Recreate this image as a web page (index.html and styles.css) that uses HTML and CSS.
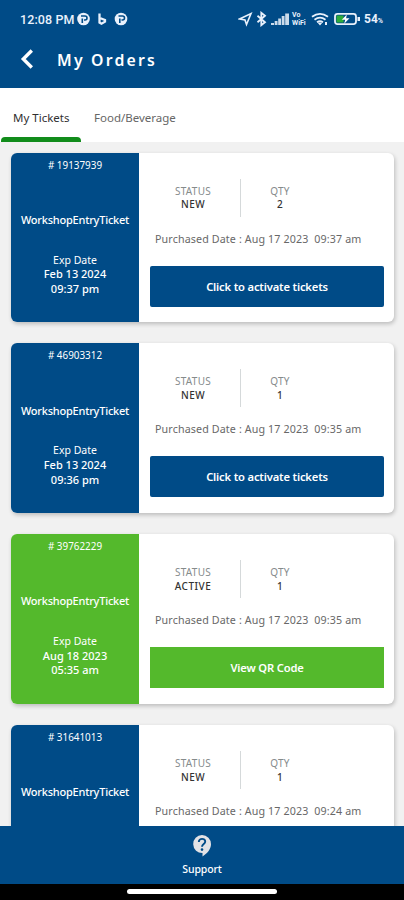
FILE: index.html
```html
<!DOCTYPE html>
<html lang="en">
<head>
<meta charset="utf-8">
<title>My Orders</title>
<link rel="stylesheet" href="styles.css">
</head>
<body>
<div class="phone">
  <header class="top">
    <div class="status">
      <span class="clock">12:08 PM</span>
      <svg class="notif" width="51" height="14" viewBox="0 0 51 14">
        <circle cx="6.500" cy="7" r="6.300" fill="#e9f1fc"/>
        <path d="M5.300 11V6.500M4 4h4a2 2 0 0 1 0 4H7" fill="none" stroke="#004b87" stroke-width="1.600"/>
        <path d="M22.500 1.500v9l2 1.200 3.500-2V8L23.500 6.200" fill="none" stroke="#e9f1fc" stroke-width="2.300"/>
        <circle cx="44" cy="7" r="6.300" fill="#e9f1fc"/>
        <path d="M42.800 11V6.500M41.500 4h4a2 2 0 0 1 0 4h-1" fill="none" stroke="#004b87" stroke-width="1.600"/>
      </svg>
      <svg class="system" width="52" height="16" viewBox="0 0 52 16">
        <g fill="none" stroke="#e9f1fc" stroke-width="1.600">
          <path d="M1.500 8 13 2.500 8.500 13.500 7 9z"/>
          <path d="m19.500 4.800 7.500 6.400-3.700 3V1.800l3.700 3-7.500 6.400" stroke-width="1.800"/>
        </g>
        <path d="M33 12h3v2h-3zM36.700 10h2.800v4h-2.800zM40.200 7.500H43V14h-2.800zM43.700 5h2.800v9h-2.800zM47.200 2.500H51V14h-3.800z" fill="#cbdbea"/>
      </svg>
      <span class="vowifi"><span>Vo</span><span>WiFi</span></span>
      <svg class="power" width="50" height="16" viewBox="0 0 50 16">
        <g fill="none" stroke="#e9f1fc" stroke-width="1.800">
          <path d="M1 5.800q8-6 16 0M3.500 8.700q5.500-4 11 0M6 11.200q3-2 6 0"/>
          <rect x="24" y="2.900" width="21" height="10.200" rx="2.500"/>
        </g>
        <path d="m6.500 11.500 2.500 3 2.500-3zM14 11h2v3h-2zM46.500 6H49v4h-2.500z" fill="#e9f1fc"/>
        <path d="M25.500 4.500h7v7h-7z" fill="#2dac3a"/>
        <path d="m35.800 3.500-5 5.200h3.400l-1 4 5.300-5.500h-3.400z" fill="#fff"/>
      </svg>
      <span class="pct">54<small>%</small></span>
    </div>
    <div class="title">
      <svg width="14" height="20" viewBox="0 0 14 20"><path d="M11.800 1.500 3.300 10l8.500 8.500" fill="none" stroke="#fff" stroke-width="3.400"/></svg>
      <h1>My Orders</h1>
    </div>
  </header>
  <nav class="tabs">
    <span class="tab active">My Tickets</span>
    <span class="tab food">Food/Beverage</span>
  </nav>
  <main class="list">
    <article class="card">
      <div class="stub"><p class="num"># 19137939</p><p class="name">WorkshopEntryTicket</p><p class="exp">Exp Date</p><p class="date">Feb 13 2024</p><p class="date">09:37 pm</p></div>
      <div class="info">
        <div class="facts"><dl><dt>STATUS</dt><dd>NEW</dd></dl><dl><dt>QTY</dt><dd>2</dd></dl></div>
        <p class="bought">Purchased Date : Aug 17 2023&nbsp; 09:37 am</p>
        <button>Click to activate tickets</button>
      </div>
    </article>
    <article class="card">
      <div class="stub"><p class="num"># 46903312</p><p class="name">WorkshopEntryTicket</p><p class="exp">Exp Date</p><p class="date">Feb 13 2024</p><p class="date">09:36 pm</p></div>
      <div class="info">
        <div class="facts"><dl><dt>STATUS</dt><dd>NEW</dd></dl><dl><dt>QTY</dt><dd>1</dd></dl></div>
        <p class="bought">Purchased Date : Aug 17 2023&nbsp; 09:35 am</p>
        <button>Click to activate tickets</button>
      </div>
    </article>
    <article class="card live">
      <div class="stub"><p class="num"># 39762229</p><p class="name">WorkshopEntryTicket</p><p class="exp">Exp Date</p><p class="date">Aug 18 2023</p><p class="date">05:35 am</p></div>
      <div class="info">
        <div class="facts"><dl><dt>STATUS</dt><dd>ACTIVE</dd></dl><dl><dt>QTY</dt><dd>1</dd></dl></div>
        <p class="bought">Purchased Date : Aug 17 2023&nbsp; 09:35 am</p>
        <button>View QR Code</button>
      </div>
    </article>
    <article class="card">
      <div class="stub"><p class="num"># 31641013</p><p class="name">WorkshopEntryTicket</p></div>
      <div class="info">
        <div class="facts"><dl><dt>STATUS</dt><dd>NEW</dd></dl><dl><dt>QTY</dt><dd>1</dd></dl></div>
        <p class="bought">Purchased Date : Aug 17 2023&nbsp; 09:24 am</p>
      </div>
    </article>
  </main>
  <footer class="support">
    <svg width="20" height="24" viewBox="0 0 20 24">
      <path d="M10 1a9 9 0 0 1 9 9.200c0 5-4 9.300-8.500 12.300v-3.400A9 9 0 1 1 10 1z" fill="#e2e2e6"/>
      <path d="M6.800 8c0-4.300 6.600-4 6.400-.3C13.100 10 10 10 10 12.800" fill="none" stroke="#004b87" stroke-width="1.900"/>
      <circle cx="10" cy="15.600" r="1.300" fill="#004b87"/>
    </svg>
    <span>Support</span>
  </footer>
  <div class="gesture"><i></i></div>
</div>
</body>
</html>
```

FILE: styles.css
```css
* { box-sizing: border-box; }
body, p, h1, dl, dt, dd { margin: 0; }
body { font-family: "Noto Sans", sans-serif; overflow: hidden; }
svg { display: block; flex: none; }
.phone { width: 404px; height: 900px; background: #f1f1f1; display: flex; flex-direction: column; overflow: hidden; }

.top { height: 88px; flex: none; background: #004b87; color: #fff; }
.status { display: flex; align-items: center; height: 38px; padding-left: 20px; color: #e9f1fc; }
.clock { width: 57px; padding-top: 1px; font: 500 12.500px/16px Roboto, sans-serif; white-space: nowrap; letter-spacing: .1px; }
.system { margin-left: 110px; }
.vowifi { width: 17px; margin-left: 2px; display: flex; flex-direction: column; gap: 1px; font: 700 7px/7px Roboto, sans-serif; }
.vowifi span { height: 7px; }
.power { margin-left: 2px; }
.pct { margin-left: 3px; padding-top: 1px; font: 700 12px/16px Roboto, sans-serif; white-space: nowrap; }
.pct small { font-size: 7px; }
.title { display: flex; align-items: center; height: 42px; padding-left: 20px; }
h1 { margin-left: 23px; font-size: 15.800px; line-height: 24px; font-weight: 600; letter-spacing: 2.200px; padding-top: 1px; }

.tabs { height: 54px; flex: none; display: flex; background: #fff; font-size: 11.500px; line-height: 16px; color: #666; }
.tab { padding-top: 22px; white-space: nowrap; }
.active { width: 81px; padding-left: 13px; color: #303030; display: flex; flex-direction: column; justify-content: space-between; }
.active::after { content: ""; height: 5px; margin-left: -12px; border-radius: 4px 4px 0 0; background: #118c1b; }
.food { margin-left: 13px; }

.list { flex: 1; min-height: 0; overflow: hidden; padding: 10.700px 10px 0 11px; display: flex; flex-direction: column; gap: 21.300px; }
.card { flex: none; height: 169.500px; display: flex; border-radius: 6px; background: #fff; box-shadow: 1px 2px 4px rgba(0, 0, 0, .22); }
.stub { flex: none; width: 128px; padding-top: 5px; border-radius: 6px 0 0 6px; background: #004b87; color: #fff; text-align: center; font-size: 11px; line-height: 14.600px; }
.num { font-size: 9.900px; }
.name { margin-top: 40.500px; font-weight: 500; letter-spacing: -.22px; }
.exp { margin-top: 25.300px; font-size: 10.500px; }
.date { font-weight: 500; }
.info { flex: 1; min-width: 0; padding: 26px 11px 0 11px; }
.facts { display: flex; height: 38px; }
.facts dl { width: 90px; padding-top: 6px; text-align: center; font-size: 10px; line-height: 13.500px; letter-spacing: .3px; }
.facts dl:first-child { width: 91px; padding-right: 4px; border-right: 1px solid #d5d9da; }
.facts dl + dl { width: 78px; }
dt { color: #858b8c; }
dd { color: #333; font-weight: 500; letter-spacing: .5px; }
.bought { margin: 14px 0 0 5px; font-size: 10.700px; line-height: 16px; letter-spacing: .13px; color: #686868; white-space: nowrap; }
button { display: block; width: 234px; height: 41px; margin-top: 19px; padding: 1px 0 0; border: 0; border-radius: 2px; background: #004b87; color: #fff; font: 600 11.200px/16px "Noto Sans", sans-serif; letter-spacing: -.17px; }
.live .stub, .live button { background: #54b92c; }
.live button { border-radius: 0; }

.support { height: 58px; flex: none; padding-top: 8px; display: flex; flex-direction: column; align-items: center; background: #004b87; color: #fff; font-size: 10.500px; line-height: 15px; font-weight: 500; letter-spacing: -.1px; }
.support span { margin-top: 4px; }
.gesture { height: 16px; flex: none; background: #000; padding-top: 5px; }
.gesture i { display: block; width: 150px; height: 5px; margin: 0 auto; border-radius: 3px; background: #fff; }
```
